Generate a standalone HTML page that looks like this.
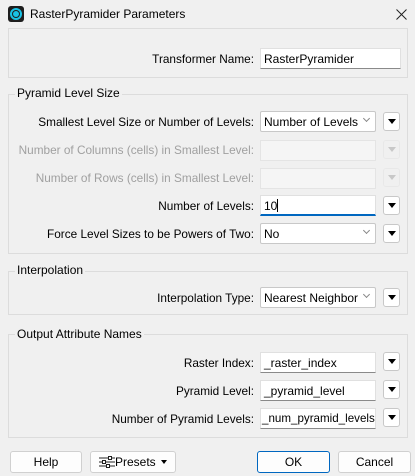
<!DOCTYPE html>
<html><head><style>
*{box-sizing:border-box;margin:0;padding:0}
body{width:415px;height:476px;background:#f0f0f0;font-family:"Liberation Sans",sans-serif;font-size:12px;color:#000;position:relative;overflow:hidden}
.a{position:absolute}
.box{position:absolute;border:1px solid #dcdcdc;background:#f0f0f0}
.leg{position:absolute;background:#f0f0f0;padding:0 2px;font-size:12px;line-height:14px}
.lbl{position:absolute;right:161px;text-align:right;white-space:nowrap;line-height:14px;font-size:11.8px}
.dis{color:#a0a0a0}
.f{position:absolute;left:260px;width:116px;height:21px;background:#fff;border:1px solid #e0e0e0;border-bottom:1px solid #8a8a8a;padding:3px 0 0 3px;line-height:14px;white-space:nowrap;overflow:hidden}
.f.cb{border:1px solid #c8c8c8;border-radius:2px}
.f.d{background:#f5f5f5;border:1px solid #e4e4e4}
.chev{position:absolute;right:6px;top:4px;width:5px;height:5px;border-right:1px solid #888;border-bottom:1px solid #888;transform:rotate(45deg);box-shadow:3px 3px 0 4px #fff}
.ab{position:absolute;left:383px;width:17px;height:19px;background:#fff;border:1px solid #c8c8c8;border-radius:3px}
.ab:after{content:"";position:absolute;left:4px;top:6px;border-left:4px solid transparent;border-right:4px solid transparent;border-top:5px solid #000}
.ab.d{background:#f0f0f0;border-color:#e8e8e8}
.ab.d:after{border-top-color:#c8c8c8}
.btn{position:absolute;top:451px;height:22px;background:#fdfdfd;border:1px solid #d0d0d0;border-radius:3px;text-align:center;line-height:20px}
</style></head><body>
<div class="a" style="left:0;top:0;width:415px;height:28px;background:#f0f0f0"></div>
<div class="a" style="left:8px;top:6px;width:16px;height:16px;background:#1e1e1e;border-radius:3px"></div>
<div class="a" style="left:10px;top:8px;width:12px;height:12px;border:2px solid #19c3e6;border-radius:50%"></div>
<div class="a" style="left:13px;top:11px;width:6px;height:6px;background:#19c3e6;border-radius:50%"></div>
<div class="a" style="left:30px;top:7px;line-height:14px">RasterPyramider Parameters</div>
<svg class="a" style="left:396px;top:9px" width="11" height="11" viewBox="0 0 11 11"><path d="M0.5 0.5L10.5 10.5M10.5 0.5L0.5 10.5" stroke="#222" stroke-width="1"/></svg>

<div class="box" style="left:8px;top:28px;width:400px;height:50px"></div>
<div class="lbl" style="top:52px">Transformer Name:</div>
<div class="f" style="top:48px;width:141px">RasterPyramider</div>

<div class="box" style="left:8px;top:94px;width:400px;height:160px"></div>
<div class="leg" style="left:15px;top:86px">Pyramid Level Size</div>
<div class="lbl" style="top:115px">Smallest Level Size or Number of Levels:</div>
<div class="f cb" style="top:111px">Number of Levels<div class="chev"></div></div>
<div class="ab" style="top:112px"></div>
<div class="lbl dis" style="top:143px">Number of Columns (cells) in Smallest Level:</div>
<div class="f d" style="top:140px"></div>
<div class="ab d" style="top:140px"></div>
<div class="lbl dis" style="top:171px">Number of Rows (cells) in Smallest Level:</div>
<div class="f d" style="top:168px"></div>
<div class="ab d" style="top:168px"></div>
<div class="lbl" style="top:199px">Number of Levels:</div>
<div class="f" style="top:195px;border-bottom:2px solid #0067c0">10<span style="display:inline-block;width:1px;height:13px;background:#000;vertical-align:-2px"></span></div>
<div class="ab" style="top:196px"></div>
<div class="lbl" style="top:227px">Force Level Sizes to be Powers of Two:</div>
<div class="f cb" style="top:223px">No<div class="chev"></div></div>
<div class="ab" style="top:224px"></div>

<div class="box" style="left:8px;top:271px;width:400px;height:44px"></div>
<div class="leg" style="left:15px;top:263px">Interpolation</div>
<div class="lbl" style="top:291px">Interpolation Type:</div>
<div class="f cb" style="top:287px">Nearest Neighbor<div class="chev"></div></div>
<div class="ab" style="top:288px"></div>

<div class="box" style="left:8px;top:334px;width:400px;height:104px"></div>
<div class="leg" style="left:15px;top:327px">Output Attribute Names</div>
<div class="lbl" style="top:356px">Raster Index:</div>
<div class="f" style="top:352px">_raster_index</div>
<div class="ab" style="top:352px"></div>
<div class="lbl" style="top:384px">Pyramid Level:</div>
<div class="f" style="top:380px">_pyramid_level</div>
<div class="ab" style="top:380px"></div>
<div class="lbl" style="top:412px">Number of Pyramid Levels:</div>
<div class="f" style="top:408px;padding-left:1px;font-size:11.6px">_num_pyramid_levels</div>
<div class="ab" style="top:408px"></div>

<div class="btn" style="left:10px;width:72px">Help</div>
<div class="btn" style="left:90px;width:86px;text-align:left;padding-left:8px">
<svg width="16" height="12" style="vertical-align:-2px" viewBox="0 0 16 12"><g stroke="#222" fill="#fff" stroke-width="1"><line x1="0" y1="2" x2="16" y2="2"/><line x1="0" y1="6" x2="16" y2="6"/><line x1="0" y1="10" x2="16" y2="10"/><rect x="9.5" y="0.5" width="3" height="3"/><rect x="3.5" y="4.5" width="3" height="3"/><rect x="7.5" y="8.5" width="3" height="3"/></g></svg>Presets
<span style="position:absolute;right:8px;top:8px;border-left:3px solid transparent;border-right:3px solid transparent;border-top:4px solid #000"></span></div>
<div class="btn" style="left:257px;width:73px;border:1px solid #0067c0">OK</div>
<div class="btn" style="left:338px;width:73px">Cancel</div>
</body></html>
